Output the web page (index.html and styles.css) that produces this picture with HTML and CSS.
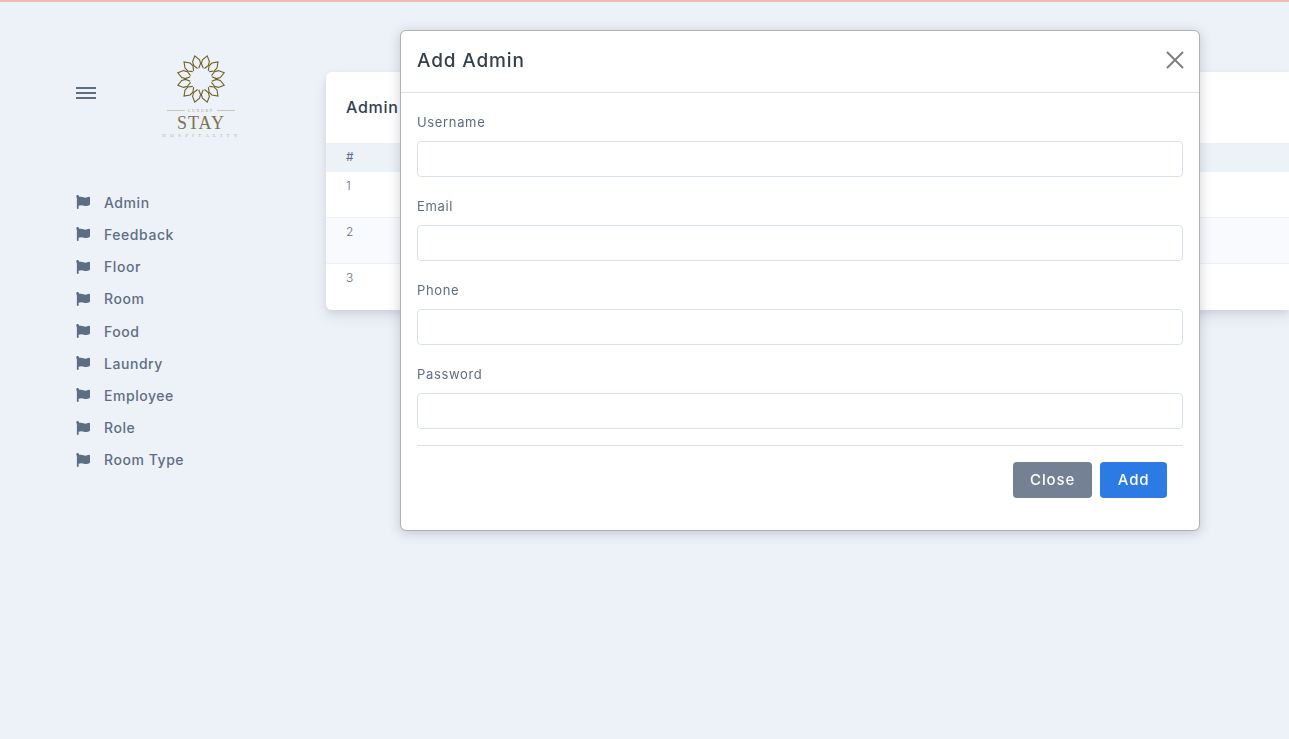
FILE: index.html
```html
<!DOCTYPE html>
<html lang="en">
<head>
    <meta charset="UTF-8">
    <meta name="viewport" content="width=device-width, initial-scale=1.0">
    <title>Admin</title>
    <link rel="stylesheet" href="styles.css">
</head>
<body>

    <svg class="icon-defs" width="0" height="0">
        <symbol id="flag" viewBox="0 0 512 512">
            <path d="M349.565 98.783C295.978 98.783 251.721 64 184.348 64c-24.955 0-47.309 4.384-68.045 12.013a55.947 55.947 0 0 0 3.586-23.562C118.117 24.015 94.806 1.206 66.338.048 34.345-1.254 8 24.296 8 56c0 19.026 9.497 35.825 24 45.945V488c0 13.255 10.745 24 24 24h16c13.255 0 24-10.745 24-24v-94.4c28.311-12.064 63.582-22.122 114.435-22.122 53.588 0 97.844 34.783 165.217 34.783 48.169 0 86.667-16.294 122.505-40.858C506.84 359.452 512 349.571 512 339.045v-243.1c0-23.393-24.269-38.87-45.485-29.016-34.338 15.948-76.454 31.854-116.95 31.854z"/>
        </symbol>
        <g id="leaf">
            <path d="M-0.6 -11 L-3.6 -15 L-3.6 -19 L0 -24 L3.6 -19 L3.6 -15 L0.6 -11"/>
        </g>
    </svg>

    <div class="layout">
        <!-- Sidebar -->
        <aside class="sidebar">
            <div class="brand">
                <div class="burger"><span></span><span></span><span></span></div>
                <div class="logo">
                    <svg class="logo-mark" width="50" height="50" viewBox="-25 -25 50 50">
                        <use href="#leaf" transform="rotate(15)"/>
                        <use href="#leaf" transform="rotate(45)"/>
                        <use href="#leaf" transform="rotate(75)"/>
                        <use href="#leaf" transform="rotate(105)"/>
                        <use href="#leaf" transform="rotate(135)"/>
                        <use href="#leaf" transform="rotate(165)"/>
                        <use href="#leaf" transform="rotate(195)"/>
                        <use href="#leaf" transform="rotate(225)"/>
                        <use href="#leaf" transform="rotate(255)"/>
                        <use href="#leaf" transform="rotate(285)"/>
                        <use href="#leaf" transform="rotate(315)"/>
                        <use href="#leaf" transform="rotate(345)"/>
                    </svg>
                    <div class="logo-top"><span>LUXURY</span></div>
                    <div class="logo-name">STAY</div>
                    <div class="logo-sub">HOSPITALITY</div>
                </div>
            </div>

            <nav class="nav">
                <a class="nav-item"><svg class="flag"><use href="#flag"/></svg>Admin</a>
                <a class="nav-item"><svg class="flag"><use href="#flag"/></svg>Feedback</a>
                <a class="nav-item"><svg class="flag"><use href="#flag"/></svg>Floor</a>
                <a class="nav-item"><svg class="flag"><use href="#flag"/></svg>Room</a>
                <a class="nav-item"><svg class="flag"><use href="#flag"/></svg>Food</a>
                <a class="nav-item"><svg class="flag"><use href="#flag"/></svg>Laundry</a>
                <a class="nav-item"><svg class="flag"><use href="#flag"/></svg>Employee</a>
                <a class="nav-item"><svg class="flag"><use href="#flag"/></svg>Role</a>
                <a class="nav-item"><svg class="flag"><use href="#flag"/></svg>Room Type</a>
            </nav>
        </aside>

        <!-- Table card behind the modal -->
        <main class="content">
            <section class="card">
                <h2 class="card-title">Admin</h2>
                <table class="table">
                    <thead>
                        <tr><th>#</th></tr>
                    </thead>
                    <tbody>
                        <tr><td>1</td></tr>
                        <tr class="striped"><td>2</td></tr>
                        <tr><td>3</td></tr>
                    </tbody>
                </table>
            </section>
        </main>
    </div>

    <!-- Add admin modal -->
    <div class="modal">
        <div class="modal-header">
            <h3 class="modal-title">Add Admin</h3>
            <svg class="modal-close" width="18" height="18" viewBox="0 0 18 18">
                <path d="M1 1 L17 17 M17 1 L1 17"/>
            </svg>
        </div>
        <form class="modal-body">
            <div class="field">
                <label for="username">Username</label>
                <input type="text" id="username">
            </div>
            <div class="field">
                <label for="email">Email</label>
                <input type="text" id="email">
            </div>
            <div class="field">
                <label for="phone">Phone</label>
                <input type="text" id="phone">
            </div>
            <div class="field">
                <label for="password">Password</label>
                <input type="password" id="password">
            </div>
            <div class="modal-footer">
                <button type="button" class="btn btn-close">Close</button>
                <button type="button" class="btn btn-add">Add</button>
            </div>
        </form>
    </div>

</body>
</html>
```

FILE: styles.css
```css
/* General styling */
html,
body {
    height: 100%;
}

body {
    margin: 0;
    overflow: hidden;
    font-family: Inter, "Noto Sans", sans-serif;
    font-size: 13px;
    color: #5e6e82;
    background-color: #edf2f9;
    border-top: 2px solid #ecbdb2;
    box-sizing: border-box;
}

.icon-defs {
    position: absolute;
}

#leaf {
    fill: none;
    stroke: #6f5f24;
    stroke-width: 1.1;
}

.layout {
    display: flex;
    padding-top: 70px;
}

/* Sidebar */
.sidebar {
    width: 250px;
    margin-left: 76px;
    margin-top: -70px;
    flex-shrink: 0;
}

.brand {
    display: flex;
    align-items: flex-start;
    padding-top: 52px;
    height: 132.2px;
}

.burger {
    width: 20px;
    margin-top: 33px;
}

.burger span {
    display: block;
    height: 2px;
    margin-bottom: 3px;
    background-color: #5e6e82;
}

.logo {
    width: 90px;
    margin-left: 60px;
    text-align: center;
    color: #7d7350;
}

.logo-mark {
    display: block;
    margin: 0 auto;
}

.logo-top {
    display: flex;
    align-items: center;
    justify-content: center;
    margin-top: 2px;
    height: 8px;
    font-family: "Liberation Serif", serif;
    font-size: 4px;
    letter-spacing: 1.6px;
    color: #a9a48e;
}

.logo-top::before,
.logo-top::after {
    content: "";
    width: 18px;
    height: 1px;
    margin: 0 3px;
    background-color: #c9c6b6;
}

.logo-name {
    margin-top: 1px;
    font-family: "Liberation Serif", serif;
    font-size: 18px;
    line-height: 16px;
    letter-spacing: 1px;
}

.logo-sub {
    margin-left: -6px;
    margin-right: -8px;
    font-family: "Liberation Serif", serif;
    font-size: 5px;
    line-height: 10px;
    letter-spacing: 4.3px;
    white-space: nowrap;
    color: #b4b09c;
}

.nav {
    display: flex;
    flex-direction: column;
}

.nav-item {
    display: flex;
    align-items: center;
    height: 32.2px;
    font-size: 14px;
    letter-spacing: 0.55px;
    font-weight: 500;
    color: #5e6e82;
}

.flag {
    width: 14px;
    height: 14px;
    margin-right: 14px;
    fill: #5e6e82;
}

/* Card */
.content {
    flex: 1;
    min-width: 0;
}

.card {
    background-color: #fff;
    border-radius: 6px 0 0 6px;
    box-shadow: 0 7px 14px rgba(65, 69, 88, 0.1), 0 3px 6px rgba(0, 0, 0, 0.07);
    overflow: hidden;
}

.card-title {
    margin: 0;
    padding: 24px 20px 25px;
    font-size: 16px;
    line-height: 22px;
    letter-spacing: 0.7px;
    font-weight: 500;
    color: #344050;
}

.table {
    width: 100%;
    border-collapse: separate;
    border-spacing: 0;
}

.table th {
    height: 29px;
    padding: 0 20px 2px;
    box-sizing: border-box;
    text-align: left;
    font-weight: 400;
    font-size: 12px;
    background-color: #edf2f9;
}

.table td {
    height: 46px;
    padding: 6px 20px;
    box-sizing: border-box;
    vertical-align: top;
    font-size: 12px;
    font-weight: 300;
    border-bottom: 1px solid #edf2f9;
}

.table tr:last-child td {
    border-bottom: none;
}

.table .striped td {
    background-color: #f9fafd;
}

/* Modal */
.modal {
    position: fixed;
    top: 30px;
    left: 400px;
    width: 800px;
    box-sizing: border-box;
    background-color: #fff;
    border: 1px solid rgba(0, 0, 0, 0.3);
    border-radius: 6px;
    box-shadow: 0 2px 12px rgba(65, 69, 88, 0.25);
}

.modal-header {
    display: flex;
    align-items: center;
    justify-content: space-between;
    height: 61px;
    padding: 0 15px 0 16px;
    border-bottom: 1px solid #d8e2ef;
}

.modal-title {
    margin: 0 0 2px;
    font-size: 19px;
    letter-spacing: 0.85px;
    font-weight: 500;
    color: #344050;
}

.modal-close {
    margin-bottom: 3px;
    fill: none;
    stroke: #7f7f7f;
    stroke-width: 2;
}

.modal-body {
    padding: 16px 16px 32px;
}

.field {
    margin-bottom: 16px;
}

.field label {
    display: block;
    height: 32px;
    line-height: 26px;
    font-size: 13px;
    letter-spacing: 0.65px;
}

.field input {
    display: block;
    width: 100%;
    height: 36px;
    box-sizing: border-box;
    border: 1px solid #d8e2ef;
    border-radius: 4px;
    background-color: #fff;
}

.modal-footer {
    display: flex;
    justify-content: flex-end;
    gap: 8px;
    padding: 16px 16px 0;
    border-top: 1px solid #d8e2ef;
}

.btn {
    height: 36px;
    padding: 0 17px 1px;
    font-family: inherit;
    font-size: 15px;
    letter-spacing: 0.9px;
    font-weight: 500;
    color: #fff;
    border: none;
    border-radius: 4px;
}

.btn-close {
    background-color: #748194;
}

.btn-add {
    padding: 0 17.5px 1px;
    background-color: #2c7be5;
}
```
